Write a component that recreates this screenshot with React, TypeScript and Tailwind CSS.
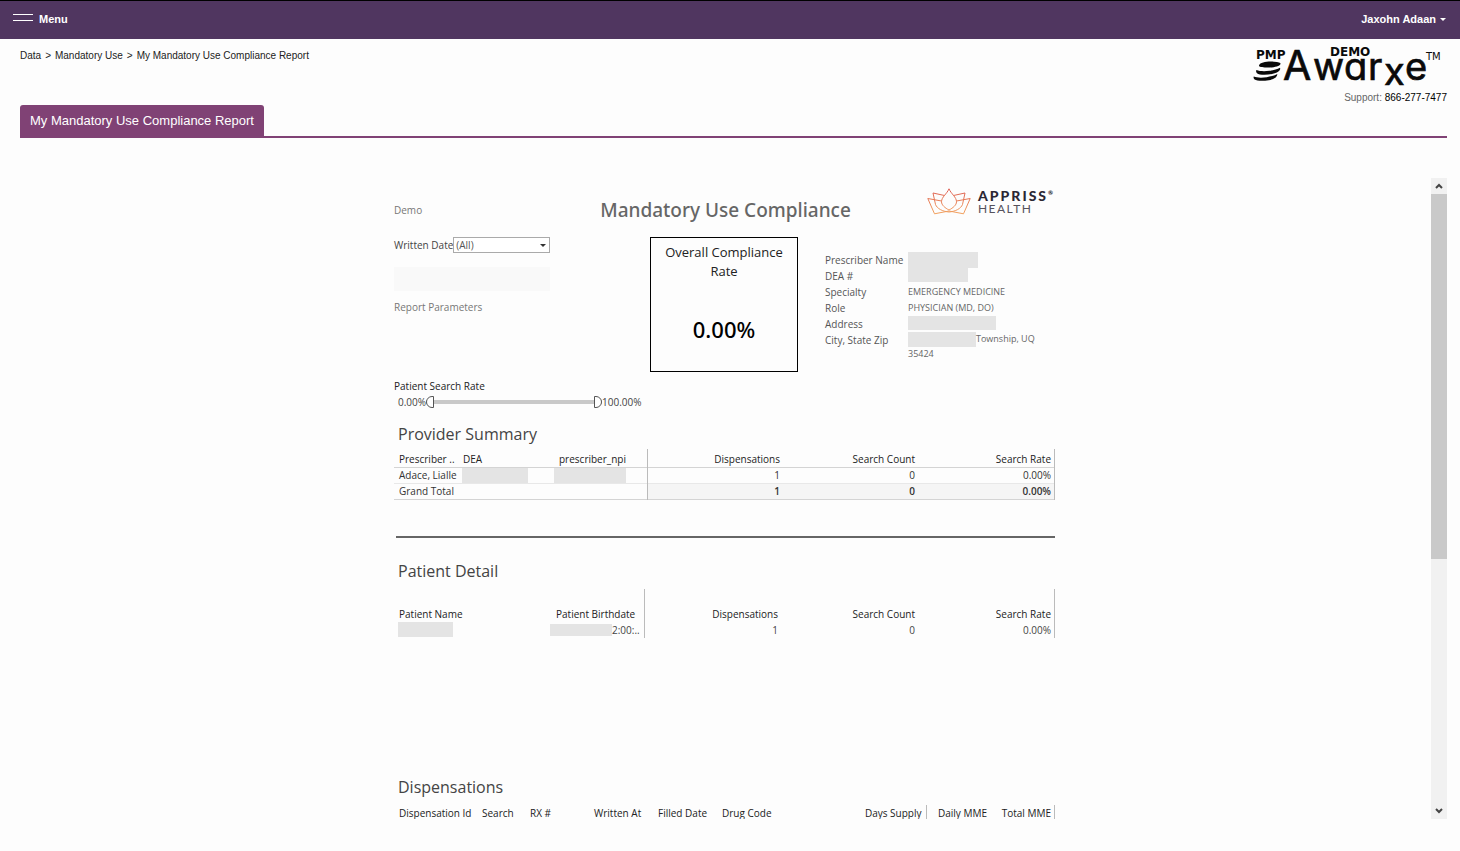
import type { ReactNode } from "react";

const HEAD = "text-[10px] leading-4 font-medium text-[#222] whitespace-nowrap";

function AwarxeLogo() {
  return (
    <svg width="194" height="44" viewBox="0 0 194 44" overflow="visible" role="img" aria-label="PMP Awarxe Demo">
      <g className="font-['DejaVu_Sans',sans-serif] font-bold" fill="#0a0a0a">
        <text x="3" y="15" fontSize="12">PMP</text>
        <text x="77" y="12" fontSize="12">DEMO</text>
      </g>
      <g fill="#0a0a0a">
        <path d="M6 21.500c1-3.500 9-4.300 15-3.800 5 .4 7 1.200 6.500 2.300-1 2.600-8 3.800-14 3.500-5-.2-8-.8-7.500-2z" />
        <path d="M3.500 26c3 1.300 8 1.500 13 .8 4-.5 8-1.500 10.500-3 1 2.500-2 5-8 6.200-6 1.100-13 1-15-.8-1-1-1.200-2.200-.5-3.200z" />
        <path d="M.8 32.500c3 1.300 8 1.400 13 .7 4-.6 8-1.700 10.500-3.200 0 3-3 5.300-8.500 6.200-6 1-12 .8-14.200-.8-1-.8-1.300-1.900-.8-2.900z" />
      </g>
      <g className="font-[Inter,sans-serif] [font-feature-settings:'cv11']" fill="#0a0a0a" stroke="#0a0a0a" strokeWidth="0.7">
        <text y="36" fontSize="38">
          <tspan x="30" fontSize="41">A</tspan>
          <tspan x="60">w</tspan>
          <tspan x="91">a</tspan>
          <tspan x="115">r</tspan>
          <tspan x="131" y="41">x</tspan>
          <tspan x="152" y="36">e</tspan>
        </text>
      </g>
      <text x="173" y="16" fontSize="10" className="font-['DejaVu_Sans',sans-serif]" fill="#0a0a0a">TM</text>
    </svg>
  );
}

function ApprissLogo() {
  return (
    <div className="flex items-start gap-[7px]">
      <svg width="44" height="28" viewBox="0 0 44 28" fill="none" strokeWidth="1" strokeLinejoin="round" aria-hidden="true">
        <defs>
          <linearGradient id="lotus" x1="0" y1="0" x2="0" y2="28" gradientUnits="userSpaceOnUse">
            <stop offset="0" stopColor="#dc5a52" />
            <stop offset="1" stopColor="#f3a860" />
          </linearGradient>
        </defs>
        <g stroke="url(#lotus)">
          <path d="M22 .8c-2 5-7.500 8.200-7.500 13C14.500 17 18 20 22 22c4-2 7.500-5 7.500-8.200 0-4.800-5.500-8-7.500-13z" />
          <path d="M17.500 7.500L6 5l2.500 11.500c1.500 4 7 7 13.500 7.500" />
          <path d="M26.500 7.500L38 5l-2.500 11.500c-1.500 4-7 7-13.500 7.500" />
          <path d="M14.500 13L.8 10.500l6.700 15.300L22 23" />
          <path d="M29.500 13l13.700-2.500-6.700 15.300L22 23" />
        </g>
      </svg>
      <div className="pt-px font-[Lato,sans-serif] text-[#2b2733]">
        <div className="flex text-[14px] leading-[14px] font-black tracking-[2px]">
          APPRISS<span className="text-[6px] leading-[7px] tracking-normal">®</span>
        </div>
        <div className="text-[12px] leading-3 tracking-[1.5px] text-[#55525c]">HEALTH</div>
      </div>
    </div>
  );
}

function Redacted({ className }: { className: string }) {
  return <span aria-hidden="true" className={`block bg-[#e4e4e4] ${className}`} />;
}

function Detail({ label, children }: { label: string; children: ReactNode }) {
  return (
    <>
      <dt>{label}</dt>
      <dd className="flex text-[9px] text-[#666]">{children}</dd>
    </>
  );
}

function SectionTitle({ children }: { children: ReactNode }) {
  return <h2 className="pl-1 text-[16px] leading-6 text-[#444]">{children}</h2>;
}

const THUMB =
  "pointer-events-none absolute inset-0 h-full w-full appearance-none bg-transparent [&::-webkit-slider-thumb]:pointer-events-auto [&::-webkit-slider-thumb]:h-3 [&::-webkit-slider-thumb]:w-2 [&::-webkit-slider-thumb]:appearance-none [&::-webkit-slider-thumb]:border [&::-webkit-slider-thumb]:border-[#555] [&::-webkit-slider-thumb]:bg-white";

function RateSlider() {
  return (
    <fieldset className="text-[10px] leading-4 text-[#444]">
      <legend className="font-medium text-[#222]">Patient Search Rate</legend>
      <div className="flex items-center pl-1">
        <span>0.00%</span>
        <div className="relative flex h-4 w-44 items-center">
          <span className="h-1 w-full bg-[#c9c9c9]" />
          <input type="range" aria-label="Minimum rate" min={0} max={100} defaultValue={0} className={`${THUMB} [&::-webkit-slider-thumb]:rounded-l-full`} />
          <input type="range" aria-label="Maximum rate" min={0} max={100} defaultValue={100} className={`${THUMB} [&::-webkit-slider-thumb]:rounded-r-full`} />
        </div>
        <span>100.00%</span>
      </div>
    </fieldset>
  );
}

function ProviderTable() {
  return (
    <table className="w-[661px] table-fixed border-collapse text-[10px] leading-[15px] text-[#333]">
      <colgroup>
        <col className="w-[66px]" />
        <col className="w-[94px]" />
        <col className="w-[93px]" />
        <col className="w-[136px]" />
        <col className="w-[135px]" />
        <col />
      </colgroup>
      <thead>
        <tr className={`${HEAD} h-[18px] border-b border-[#d4d4d4] text-left align-bottom`}>
          <th className="pl-[5px] font-medium">Prescriber ..</th>
          <th className="pl-[3px] font-medium">DEA</th>
          <th className="pl-[5px] font-medium">prescriber_npi</th>
          <th className="border-l border-[#bbb] pr-[3px] text-right font-medium">Dispensations</th>
          <th className="pr-[3px] text-right font-medium">Search Count</th>
          <th className="border-r border-[#bbb] pr-[3px] text-right font-medium">Search Rate</th>
        </tr>
      </thead>
      <tbody>
        <tr className="border-b border-[#e8e8e8]">
          <th className="pl-[5px] text-left font-medium whitespace-nowrap">Adace, Lialle</th>
          <td className="pl-[2px]"><Redacted className="h-[15px] w-[66px]" /></td>
          <td><Redacted className="h-[15px] w-[72px]" /></td>
          <td className="border-l border-[#bbb] pr-[3px] text-right">1</td>
          <td className="pr-[3px] text-right">0</td>
          <td className="border-r border-[#bbb] pr-[3px] text-right">0.00%</td>
        </tr>
        <tr className="border-b border-[#d4d4d4] font-semibold">
          <th className="pl-[5px] text-left font-medium whitespace-nowrap" colSpan={3}>Grand Total</th>
          <td className="border-l border-[#bbb] bg-[#f5f5f5] pr-[3px] text-right">1</td>
          <td className="bg-[#f5f5f5] pr-[3px] text-right">0</td>
          <td className="border-r border-[#bbb] bg-[#f5f5f5] pr-[3px] text-right">0.00%</td>
        </tr>
      </tbody>
    </table>
  );
}

function PatientTable() {
  return (
    <table className="w-[661px] table-fixed border-collapse text-[10px] leading-4 text-[#444]">
      <colgroup>
        <col className="w-[156px]" />
        <col className="w-[94px]" />
        <col className="w-[137px]" />
        <col className="w-[137px]" />
        <col />
      </colgroup>
      <thead>
        <tr className={`${HEAD} h-[33px] text-left align-bottom`}>
          <th className="pl-[5px] font-medium">Patient Name</th>
          <th className="pl-[6px] font-medium">Patient Birthdate</th>
          <th className="border-l border-[#bbb] pr-[3px] text-right font-medium">Dispensations</th>
          <th className="pr-[3px] text-right font-medium">Search Count</th>
          <th className="border-r border-[#bbb] pr-[3px] text-right font-medium">Search Rate</th>
        </tr>
      </thead>
      <tbody>
        <tr>
          <td className="pl-1 align-top"><Redacted className="h-[15px] w-[55px]" /></td>
          <td>
            <div className="flex items-center">
              <Redacted className="h-3 w-[62px]" />2:00:..
            </div>
          </td>
          <td className="border-l border-[#bbb] pr-[3px] text-right">1</td>
          <td className="pr-[3px] text-right">0</td>
          <td className="border-r border-[#bbb] pr-[3px] text-right">0.00%</td>
        </tr>
      </tbody>
    </table>
  );
}

function DispensationTable() {
  return (
    <table className="w-[661px] table-fixed border-collapse">
      <colgroup>
        <col className="w-[83px]" />
        <col className="w-[48px]" />
        <col className="w-[64px]" />
        <col className="w-[64px]" />
        <col className="w-[64px]" />
        <col className="w-[130px]" />
        <col className="w-[79px]" />
        <col className="w-[64px]" />
        <col />
      </colgroup>
      <thead>
        <tr className={`${HEAD} h-4 text-left`}>
          <th className="pl-[5px] font-medium">Dispensation Id</th>
          <th className="pl-[5px] font-medium">Search</th>
          <th className="pl-[5px] font-medium">RX #</th>
          <th className="pl-[5px] font-medium">Written At</th>
          <th className="pl-[5px] font-medium">Filled Date</th>
          <th className="pl-[5px] font-medium">Drug Code</th>
          <th className="border-r border-[#bbb] pr-1 text-right font-medium">Days Supply</th>
          <th className="pr-[3px] text-right font-medium">Daily MME</th>
          <th className="border-r border-[#bbb] pr-[3px] text-right font-medium">Total MME</th>
        </tr>
      </thead>
    </table>
  );
}

function Report() {
  return (
    <article className="w-[663px] shrink-0 font-['Open_Sans','Noto_Sans',sans-serif]">
      <header className="grid h-[58px] grid-cols-[1fr_auto_1fr] items-start">
        <p className="pt-[23px] text-[10px] leading-4 text-[#777]">Demo</p>
        <h1 className="pt-[19px] font-['Noto_Sans',sans-serif] text-[19px] leading-6 font-medium text-[#666]">Mandatory Use Compliance</h1>
        <div className="justify-self-end pt-[9px] pr-1"><ApprissLogo /></div>
      </header>

      <section className="grid grid-cols-[256px_148px_1fr]">
        <div className="text-[10px] leading-4 text-[#777]">
          <label className="flex items-center text-[#444]">
            Written Date
            <span className="relative">
              <select className="block h-4 w-[97px] appearance-none border border-[#aaa] bg-white px-0.5 text-[10px] leading-[14px] text-[#555]">
                <option>(All)</option>
              </select>
              <svg className="pointer-events-none absolute top-[7px] right-1" width="6" height="3" viewBox="0 0 6 3" aria-hidden="true">
                <path d="M0 0h6L3 3z" fill="#333" />
              </svg>
            </span>
          </label>
          <div className="mt-[14px] h-6 w-[156px] bg-[#f9f9f9]" />
          <p className="mt-2">Report Parameters</p>
        </div>
        <div className="flex h-[135px] flex-col items-center border border-black px-2 pt-[5px] text-center">
          <h2 className="text-[13px] leading-[19px] text-[#222]">Overall Compliance Rate</h2>
          <p className="pt-[34px] font-['Noto_Sans',sans-serif] text-[22px] leading-7 font-medium text-black">0.00%</p>
        </div>
        <dl className="grid auto-rows-[16px] grid-cols-[83px_1fr] content-start pt-[15px] pl-[27px] text-[10px] leading-4 text-[#555]">
          <Detail label="Prescriber Name"><Redacted className="h-4 w-[70px]" /></Detail>
          <Detail label="DEA #"><Redacted className="h-[14px] w-[60px]" /></Detail>
          <Detail label="Specialty">EMERGENCY MEDICINE</Detail>
          <Detail label="Role">PHYSICIAN (MD, DO)</Detail>
          <Detail label="Address"><Redacted className="h-[14px] w-[88px]" /></Detail>
          <Detail label="City, State Zip">
            <span className="flex flex-wrap leading-[14px] whitespace-nowrap">
              <Redacted className="h-[15px] w-[68px]" />Township, UQ
              <span className="w-full">35424</span>
            </span>
          </Detail>
        </dl>
      </section>

      <div className="pt-[6px]"><RateSlider /></div>

      <section className="pt-3">
        <SectionTitle>Provider Summary</SectionTitle>
        <div className="pt-[3px]"><ProviderTable /></div>
      </section>

      <hr className="mt-9 mr-0.5 ml-0.5 border-t-2 border-[#666]" />

      <section className="pt-[21px]">
        <SectionTitle>Patient Detail</SectionTitle>
        <div className="pt-[6px]"><PatientTable /></div>
      </section>

      <section className="pt-[137px]">
        <SectionTitle>Dispensations</SectionTitle>
        <div className="pt-[6px]"><DispensationTable /></div>
      </section>
    </article>
  );
}

function ScrollButton({ label, d }: { label: string; d: string }) {
  return (
    <button type="button" aria-label={label} className="flex h-4 w-full items-center justify-center">
      <svg width="8" height="6" viewBox="0 0 8 6" fill="none" stroke="#444" strokeWidth="2" aria-hidden="true">
        <path d={d} />
      </svg>
    </button>
  );
}

export default function App() {
  return (
    <div className="flex h-screen flex-col bg-[#fdfdfd] font-['Liberation_Sans',Arial,sans-serif] text-[#222]">
      <header className="flex h-[39px] shrink-0 items-center justify-between border-t border-black bg-[#503660] pr-[14px] pb-0.5 pl-[13px] text-[11px] font-bold text-white">
        <button type="button" className="flex items-center gap-1.5">
          <span className="mb-1 h-[7px] w-5 border-y border-white" />
          Menu
        </button>
        <button type="button" className="flex items-center gap-1">
          Jaxohn Adaan
          <svg width="6" height="3" viewBox="0 0 6 3" aria-hidden="true"><path d="M0 0h6L3 3z" fill="#fff" /></svg>
        </button>
      </header>

      <div className="flex h-[66px] shrink-0 items-start justify-between pr-[13px] pl-5">
        <nav aria-label="Breadcrumb" className="flex gap-1 pt-[9px] text-[10px] leading-4">
          <a href="#data">Data</a>&gt;
          <a href="#mandatory-use">Mandatory Use</a>&gt;
          <a href="#report">My Mandatory Use Compliance Report</a>
        </nav>
        <div className="flex flex-col items-end pt-[5px]">
          <AwarxeLogo />
          <p className="pt-0.5 text-[10px] leading-4 text-[#666]">
            Support: <a href="tel:8662777477" className="text-black">866-277-7477</a>
          </p>
        </div>
      </div>

      <div role="tablist" className="mr-[13px] ml-5 flex shrink-0 border-b-2 border-[#804275]">
        <button type="button" role="tab" aria-selected="true" className="h-[31px] rounded-t-[3px] bg-[#804275] px-[10px] text-[13px] text-white">
          My Mandatory Use Compliance Report
        </button>
      </div>

      <main className="mt-10 mr-[13px] mb-8 ml-5 flex min-h-0 flex-1">
        <div className="flex min-w-0 flex-1 justify-center overflow-hidden pt-px">
          <Report />
        </div>
        <div className="flex w-4 shrink-0 flex-col bg-[#f1f1f1]">
          <ScrollButton label="Scroll up" d="M1 5l3-3 3 3" />
          <div className="min-h-0 flex-1"><div className="h-3/5 bg-[#c9c9c9]" /></div>
          <ScrollButton label="Scroll down" d="M1 1l3 3 3-3" />
        </div>
      </main>
    </div>
  );
}
